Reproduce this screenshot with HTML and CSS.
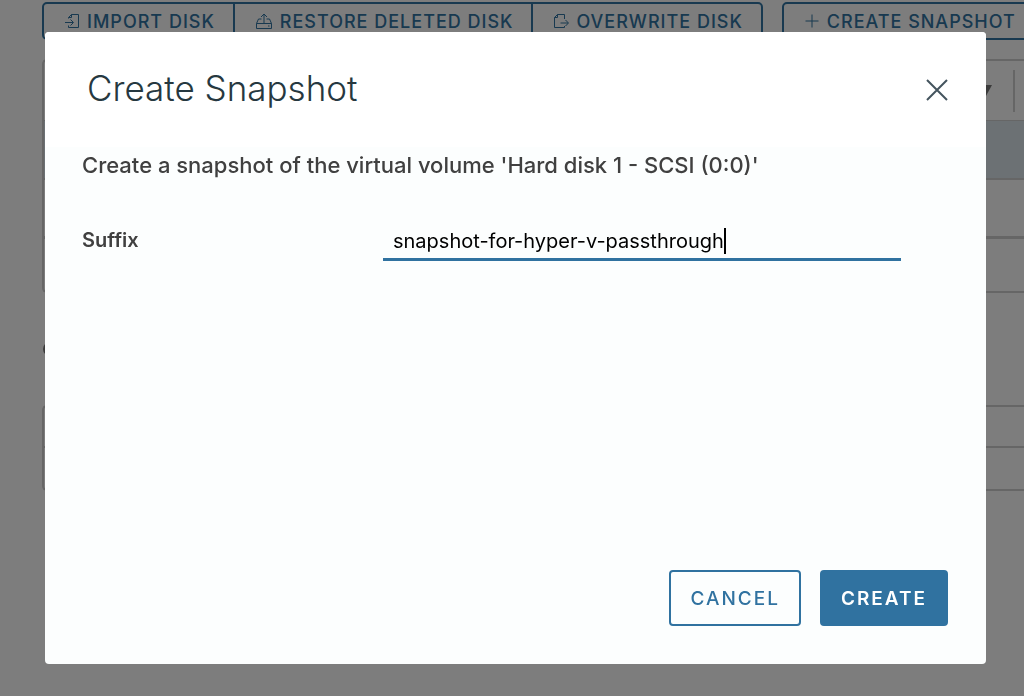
FILE: index.html
```html
<!DOCTYPE html>
<html lang="en">
<head>
    <meta charset="UTF-8">
    <meta name="viewport" content="width=device-width, initial-scale=1.0">
    <title>Create Snapshot</title>
    <link rel="stylesheet" href="styles.css">
</head>
<body>
    <div class="page">
        <div class="toolbar">
            <div class="btn-group">
                <button type="button" class="tool-btn">
                    <svg class="icon" viewBox="0 0 16 16"><path d="M4.500 5.500V4.500L7.500 1.500H14.500V14.500H4.500V12.500M7.500 1.500V4.500H4.500M1 9.500H9M6.500 6.500L9.500 9.500L6.500 12.500"/></svg>
                    Import disk
                </button>
                <button type="button" class="tool-btn">
                    <svg class="icon icon-wide" viewBox="0 0 18 16"><path d="M6.500 6H3.500L1.500 10.500V15.500H16.500V10.500L14.500 6H11.500M1.500 10.500H16.500M13 13H14.500M9 10V1M6 4L9 1L12 4"/></svg>
                    Restore deleted disk
                </button>
                <button type="button" class="tool-btn">
                    <svg class="icon" viewBox="0 0 16 16"><path d="M11.500 6V1.500H4.500L1.500 4.500V14.500H11.500V13M4.500 1.500V4.500H1.500M7.500 10H15M12.500 7L15.500 10L12.500 13"/></svg>
                    Overwrite disk
                </button>
            </div>
            <div class="btn-group">
                <button type="button" class="tool-btn">
                    <svg class="icon" viewBox="0 0 16 16"><path d="M8 1.500V14.500M1.500 8H14.500"/></svg>
                    Create snapshot
                </button>
            </div>
        </div>
        <div class="grid">
            <div class="grid-head"><span class="filter"></span><span class="separator"></span></div>
            <div class="grid-row selected"></div>
            <div class="grid-row"></div>
            <div class="grid-foot"></div>
        </div>
        <div class="option"><span class="dot"></span></div>
        <div class="grid">
            <div class="small-row"></div>
            <div class="small-row last"></div>
        </div>
    </div>

    <div class="backdrop">
        <div class="modal" role="dialog" aria-labelledby="modal-title">
            <div class="modal-header">
                <h1 id="modal-title">Create Snapshot</h1>
                <button type="button" class="close" aria-label="Close">
                    <svg viewBox="0 0 24 24"><path d="M2 2L22 22M22 2L2 22"/></svg>
                </button>
            </div>
            <form class="modal-form">
                <div class="modal-body">
                    <p class="message">Create a snapshot of the virtual volume 'Hard disk 1 - SCSI (0:0)'</p>
                    <div class="form-row">
                        <label for="suffix">Suffix</label>
                        <div class="field">
                            <input type="text" id="suffix" name="suffix" value="snapshot-for-hyper-v-passthrough">
                            <span class="caret"></span>
                        </div>
                    </div>
                </div>
                <div class="modal-footer">
                    <button type="button" class="btn">Cancel</button>
                    <button type="submit" class="btn btn-primary">Create</button>
                </div>
            </form>
        </div>
    </div>
</body>
</html>
```

FILE: styles.css
```css
* {
    box-sizing: border-box;
}
body {
    margin: 0;
    height: 100vh;
    overflow: hidden;
    background-color: #fafafa;
    font-family: Inter, "Open Sans", sans-serif;
    color: #404040;
}
button {
    font-family: inherit;
    cursor: pointer;
}
svg {
    fill: none;
    stroke: currentColor;
}

/* page behind the dialog */
.page {
    padding: 2px 0 0 42px;
}
.toolbar {
    display: flex;
    gap: 19px;
    margin-bottom: 19px;
}
.btn-group {
    display: flex;
    flex-shrink: 0;
    border: 2px solid #3072a0;
    border-radius: 5px;
}
.tool-btn {
    display: flex;
    align-items: center;
    gap: 7px;
    height: 34px;
    padding: 0 18px 0 20px;
    border: 0;
    background: none;
    color: #3072a0;
    font-size: 18px;
    font-weight: 500;
    letter-spacing: 1px;
    text-transform: uppercase;
    white-space: nowrap;
}
.tool-btn + .tool-btn {
    border-left: 2px solid #3072a0;
}
.icon {
    width: 16px;
    height: 16px;
}
.icon-wide {
    width: 18px;
}
.grid {
    border: 2px solid #cccccc;
    border-right: 0;
    border-radius: 5px 0 0 5px;
}
.grid-head {
    display: flex;
    align-items: center;
    justify-content: flex-end;
    gap: 21px;
    height: 60px;
    padding-right: 9px;
    border-bottom: 1px solid #cccccc;
}
.filter {
    border: 6px solid transparent;
    border-top: 11px solid #777777;
    border-bottom: 0;
}
.separator {
    width: 2px;
    height: 42px;
    background-color: #cccccc;
}
.grid-row {
    height: 59px;
    border-bottom: 3px solid #cccccc;
}
.grid-row.selected {
    background-color: #d8e3e9;
    border-bottom-width: 2px;
}
.grid-foot {
    height: 52px;
}
.option {
    display: flex;
    align-items: center;
    height: 112px;
    padding-left: 1px;
}
.dot {
    width: 14px;
    height: 14px;
    border: 2px solid #777777;
    border-radius: 50%;
}
.small-row {
    height: 41px;
    border-bottom: 2px solid #cccccc;
}
.small-row.last {
    border-bottom: 0;
}

/* dialog */
.backdrop {
    position: fixed;
    inset: 0;
    display: flex;
    padding: 32px 38px 32px 45px;
    background-color: rgba(0, 0, 0, 0.5);
}
.modal {
    display: flex;
    flex-direction: column;
    flex: 1;
    overflow: hidden;
    background-color: #fcfefe;
    border-radius: 4px;
}
.modal-header {
    display: flex;
    align-items: center;
    justify-content: space-between;
    height: 115px;
    padding: 0 37px 0 42px;
    background-color: #ffffff;
}
.modal-header h1 {
    margin: 0 0 4px;
    color: #263840;
    font-size: 35px;
    font-weight: 300;
    line-height: 44px;
}
.close {
    display: flex;
    padding: 0;
    border: 0;
    background: none;
    color: #44545e;
}
.close svg {
    width: 24px;
    height: 24px;
    stroke-width: 2;
}
.modal-form {
    display: flex;
    flex-direction: column;
    flex: 1;
}
.modal-body {
    flex: 1;
    padding: 4px 38px 0 37px;
}
.message {
    margin: 0 0 44px;
    font-size: 22px;
    font-weight: 500;
    line-height: 28px;
}
.form-row {
    display: grid;
    grid-template-columns: 301px 1fr;
    padding-right: 47px;
}
.form-row label {
    font-size: 20px;
    font-weight: 600;
    line-height: 34px;
}
.field {
    display: flex;
    align-items: center;
    height: 38px;
    padding-left: 10px;
    border-bottom: 3px solid #3072a0;
}
.field input {
    field-sizing: content;
    padding: 0;
    border: 0;
    outline: 0;
    background: none;
    color: #000000;
    font-family: inherit;
    font-size: 20px;
}
.caret {
    width: 2px;
    height: 26px;
    background-color: #000000;
}
.modal-footer {
    display: flex;
    justify-content: flex-end;
    gap: 19px;
    padding: 0 38px;
    margin-bottom: 38px;
}
.btn {
    height: 56px;
    padding: 0 19px;
    border: 2px solid #3072a0;
    border-radius: 4px;
    background-color: #fcfefe;
    color: #3072a0;
    font-size: 19px;
    font-weight: 500;
    letter-spacing: 2px;
    text-transform: uppercase;
}
.btn-primary {
    background-color: #3072a0;
    color: #ffffff;
    font-weight: 600;
}
```
